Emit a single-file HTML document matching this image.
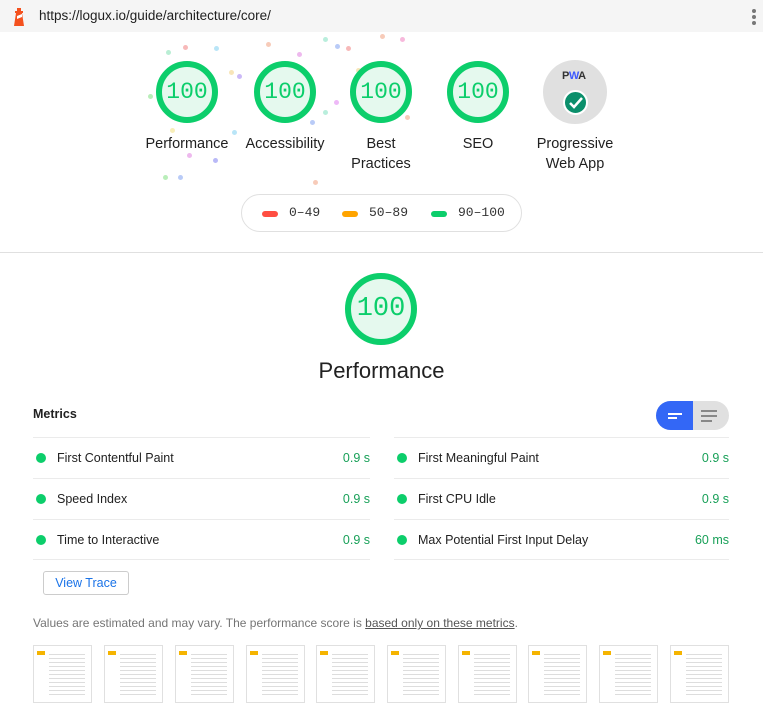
<!DOCTYPE html>
<html><head><meta charset="utf-8"><style>
*{margin:0;padding:0;box-sizing:border-box}
body{width:763px;height:721px;overflow:hidden;background:#fff;font-family:"Liberation Sans",sans-serif;color:#212121;position:relative}
.top{position:absolute;left:0;top:0;width:763px;height:32px;background:#f5f5f5}
.url{position:absolute;left:39px;top:8px;font-size:13.5px;color:#212121}
.abs{position:absolute}
.g{position:absolute;width:62px;height:62px;border-radius:50%;border:6px solid #0cce6b;background:#e5f9ee;color:#0cce6b;font-family:"Liberation Mono",monospace;font-size:23px;text-align:center;line-height:50px}
.lbl{position:absolute;width:120px;text-align:center;font-size:14.5px;line-height:20px;color:#212121}
.dot{position:absolute;width:5px;height:5px;border-radius:50%;opacity:.55}
.row{position:absolute;height:41px;border-top:1px solid #ebebeb;font-size:12.5px}
.row .b{position:absolute;left:3px;top:15px;width:10px;height:10px;border-radius:50%;background:#0cce6b}
.row .t{position:absolute;left:24px;top:13px}
.row .v{position:absolute;right:0;top:13px;color:#18a058}
.shot{position:absolute;top:645px;width:59px;height:58px;border:1px solid #e0e0e0;background:#fff}
.shot::before{content:"";position:absolute;left:3px;top:5px;width:8px;height:4px;background:#f5b400}
.shot::after{content:"";position:absolute;left:15px;top:5px;width:36px;height:45px;background:repeating-linear-gradient(#fff 0 3px,#ddd 3px 4px)}
</style></head><body>
<div class="top"></div>
<svg class="abs" style="left:11px;top:7px" width="16" height="19" viewBox="0 0 16 19"><path d="M6 1h4v3h2v2h-1l2 13H3L5 6H4V4h2z" fill="#f4511e"/><path d="M6 9l5-2v3l-5 2z" fill="#fff"/></svg>
<div class="url">https://logux.io/guide/architecture/core/</div>
<div class="abs" style="left:752px;top:9px;width:4px;height:4px;border-radius:2px;background:#777;box-shadow:0 6px 0 #777,0 12px 0 #777"></div>

<div class="dot" style="left:183px;top:45px;background:#f08080"></div>
<div class="dot" style="left:214px;top:46px;background:#80d0f0"></div>
<div class="dot" style="left:166px;top:50px;background:#80e0b0"></div>
<div class="dot" style="left:229px;top:70px;background:#f0d080"></div>
<div class="dot" style="left:237px;top:74px;background:#a080f0"></div>
<div class="dot" style="left:148px;top:94px;background:#80e080"></div>
<div class="dot" style="left:170px;top:128px;background:#f0e080"></div>
<div class="dot" style="left:232px;top:130px;background:#80d0f0"></div>
<div class="dot" style="left:187px;top:153px;background:#e080e0"></div>
<div class="dot" style="left:213px;top:158px;background:#8080f0"></div>
<div class="dot" style="left:163px;top:175px;background:#80e080"></div>
<div class="dot" style="left:178px;top:175px;background:#80a0f0"></div>
<div class="dot" style="left:266px;top:42px;background:#f0a080"></div>
<div class="dot" style="left:297px;top:52px;background:#e080e0"></div>
<div class="dot" style="left:323px;top:37px;background:#80e0c0"></div>
<div class="dot" style="left:335px;top:44px;background:#80a0f0"></div>
<div class="dot" style="left:346px;top:46px;background:#f08080"></div>
<div class="dot" style="left:356px;top:68px;background:#f0d080"></div>
<div class="dot" style="left:334px;top:100px;background:#e080f0"></div>
<div class="dot" style="left:323px;top:110px;background:#80e0c0"></div>
<div class="dot" style="left:310px;top:120px;background:#80a0f0"></div>
<div class="dot" style="left:313px;top:180px;background:#f0a080"></div>
<div class="dot" style="left:380px;top:34px;background:#f0a080"></div>
<div class="dot" style="left:400px;top:37px;background:#f080c0"></div>
<div class="dot" style="left:405px;top:115px;background:#f0a080"></div>
<div class="dot" style="left:365px;top:90px;background:#80a0f0"></div>

<div class="g" style="left:156px;top:61px">100</div>
<div class="g" style="left:254px;top:61px">100</div>
<div class="g" style="left:350px;top:61px">100</div>
<div class="g" style="left:447px;top:61px">100</div>
<div class="abs" style="left:543px;top:60px;width:64px;height:64px;border-radius:50%;background:#e0e0e0"></div>
<div class="abs" style="left:562px;top:70px;font-size:11px;font-weight:bold;color:#333;letter-spacing:-.5px">P<span style="color:#3d5afe">W</span>A</div>
<div class="abs" style="left:563px;top:90px;width:25px;height:25px;border-radius:50%;background:#0b8f6b;border:2px solid #fff"></div>
<svg class="abs" style="left:567px;top:95px" width="17" height="15"><path d="M3 8l4 4 8-9" stroke="#fff" stroke-width="2.5" fill="none"/></svg>

<div class="lbl" style="left:127px;top:134px">Performance</div>
<div class="lbl" style="left:225px;top:134px">Accessibility</div>
<div class="lbl" style="left:321px;top:134px">Best<br>Practices</div>
<div class="lbl" style="left:418px;top:134px">SEO</div>
<div class="lbl" style="left:515px;top:134px">Progressive<br>Web App</div>

<div class="abs" style="left:241px;top:194px;width:281px;height:38px;border:1px solid #e0e0e0;border-radius:19px;font-family:'Liberation Mono',monospace;font-size:13px;color:#333">
<span class="abs" style="left:20px;top:16px;width:16px;height:6px;border-radius:3px;background:#ff4e42"></span><span class="abs" style="left:47px;top:10px">0–49</span>
<span class="abs" style="left:100px;top:16px;width:16px;height:6px;border-radius:3px;background:#ffa400"></span><span class="abs" style="left:127px;top:10px">50–89</span>
<span class="abs" style="left:189px;top:16px;width:16px;height:6px;border-radius:3px;background:#0cce6b"></span><span class="abs" style="left:216px;top:10px">90–100</span>
</div>
<div class="abs" style="left:0;top:252px;width:763px;height:1px;background:#e0e0e0"></div>

<div class="g" style="left:345px;top:273px;width:72px;height:72px;line-height:60px;font-size:27px">100</div>
<div class="abs" style="left:0;top:358px;width:763px;text-align:center;font-size:22px">Performance</div>

<div class="abs" style="left:33px;top:407px;font-size:12.5px;font-weight:bold">Metrics</div>
<div class="abs" style="left:656px;top:401px;width:73px;height:29px;border-radius:15px;background:#e0e0e0;overflow:hidden">
<div class="abs" style="left:0;top:0;width:37px;height:29px;background:#3367f6"></div>
<div class="abs" style="left:12px;top:12px;width:14px;height:2px;background:#fff"></div>
<div class="abs" style="left:12px;top:16px;width:9px;height:2px;background:#fff"></div>
<div class="abs" style="left:45px;top:9px;width:16px;height:2px;background:#888"></div>
<div class="abs" style="left:45px;top:14px;width:16px;height:2px;background:#888"></div>
<div class="abs" style="left:45px;top:19px;width:11px;height:2px;background:#888"></div>
</div>

<div class="row" style="left:33px;top:437px;width:337px"><span class="b"></span><span class="t">First Contentful Paint</span><span class="v">0.9 s</span></div>
<div class="row" style="left:33px;top:478px;width:337px"><span class="b"></span><span class="t">Speed Index</span><span class="v">0.9 s</span></div>
<div class="row" style="left:33px;top:519px;width:337px;border-bottom:1px solid #ebebeb"><span class="b"></span><span class="t">Time to Interactive</span><span class="v">0.9 s</span></div>
<div class="row" style="left:394px;top:437px;width:335px"><span class="b"></span><span class="t">First Meaningful Paint</span><span class="v">0.9 s</span></div>
<div class="row" style="left:394px;top:478px;width:335px"><span class="b"></span><span class="t">First CPU Idle</span><span class="v">0.9 s</span></div>
<div class="row" style="left:394px;top:519px;width:335px;border-bottom:1px solid #ebebeb"><span class="b"></span><span class="t">Max Potential First Input Delay</span><span class="v">60 ms</span></div>

<div class="abs" style="left:43px;top:571px;width:86px;height:24px;border:1px solid #ccc;border-radius:3px;color:#1a73e8;font-size:12.5px;text-align:center;line-height:22px">View Trace</div>
<div class="abs" style="left:33px;top:616px;font-size:12px;color:#757575">Values are estimated and may vary. The performance score is <span style="text-decoration:underline;color:#555">based only on these metrics</span>.</div>

<div class="shot" style="left:33px"></div><div class="shot" style="left:104px"></div><div class="shot" style="left:175px"></div><div class="shot" style="left:246px"></div><div class="shot" style="left:316px"></div><div class="shot" style="left:387px"></div><div class="shot" style="left:458px"></div><div class="shot" style="left:528px"></div><div class="shot" style="left:599px"></div><div class="shot" style="left:670px"></div>
</body></html>
